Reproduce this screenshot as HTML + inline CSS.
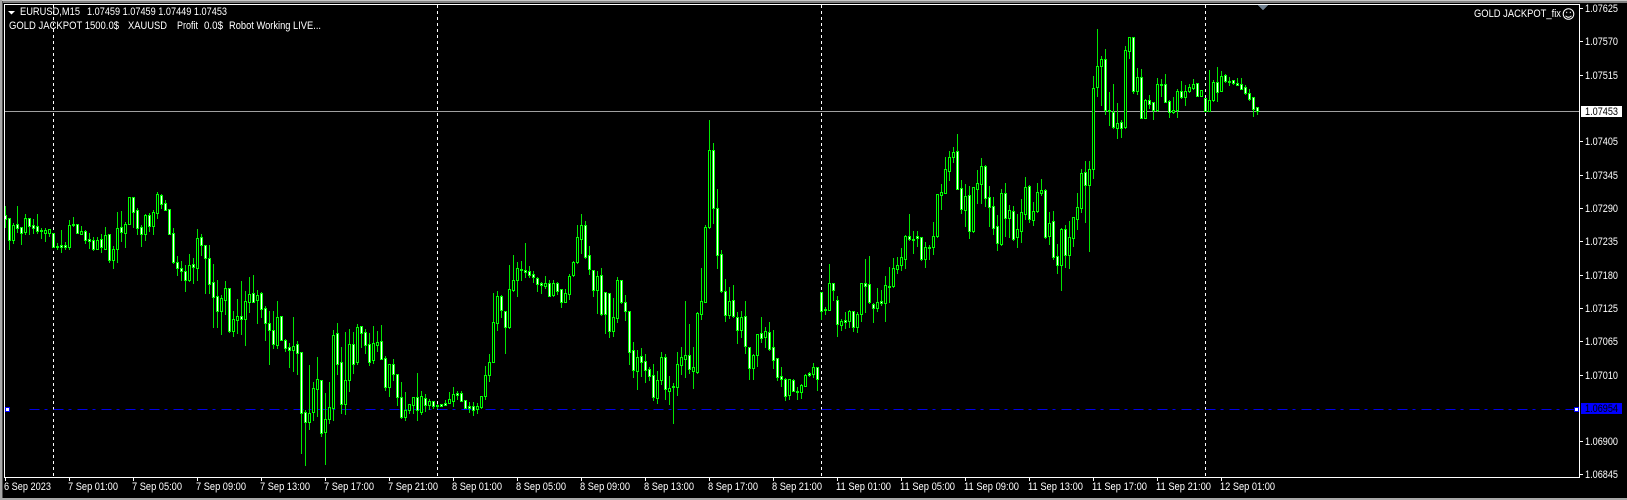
<!DOCTYPE html>
<html>
<head>
<meta charset="utf-8">
<title>EURUSD,M15</title>
<style>
html,body{margin:0;padding:0;background:#000;width:1627px;height:500px;overflow:hidden}
svg{display:block;position:absolute;left:0;top:0}
text{font-family:"Liberation Sans",Arial,sans-serif;font-size:11px;fill:#fff}
</style>
</head>
<body>
<svg xmlns="http://www.w3.org/2000/svg" width="1627" height="500" viewBox="0 0 1627 500" shape-rendering="crispEdges">
<rect width="1627" height="500" fill="#000"/>
<rect width="1627" height="1" fill="#c8c8c8"/>
<rect y="1" width="1627" height="2" fill="#808080"/>
<rect width="2" height="500" fill="#a8a8a8"/>
<rect x="2" y="1" width="1" height="499" fill="#505050"/>
<rect y="498" width="1627" height="2" fill="#a8a8a8"/>
<!-- separators -->
<g stroke="#fff" stroke-width="1" stroke-dasharray="3 3">
<path d="M53.5 5V477M437.5 5V477M821.5 5V477M1205.5 5V477"/>
</g>
<!-- price lines -->
<rect x="5" y="111" width="1574" height="1" fill="#a0a0a0"/>
<path d="M29.3 409.5H1574" stroke="#0000e6" stroke-width="1" stroke-dasharray="10 5 3 6" fill="none"/>
<rect x="5" y="407" width="5" height="5" fill="#0000ff"/><rect x="6" y="408" width="3" height="3" fill="#fff"/>
<rect x="1574" y="407" width="5" height="5" fill="#0000ff"/><rect x="1575" y="408" width="3" height="3" fill="#fff"/>
<g id="candles"></g>
<!-- frame -->
<rect x="4" y="4" width="1576" height="1" fill="#fff"/>
<rect x="4" y="4" width="1" height="474" fill="#fff"/>
<rect x="4" y="477" width="1576" height="1" fill="#fff"/>
<rect x="1579" y="4" width="1" height="474" fill="#fff"/>
<path d="M1258 5H1268L1263 10.5Z" fill="#708090"/>
<!-- ticks -->
<path stroke="#fff" d="M1580 8.5h3M1580 41.5h3M1580 75.5h3M1580 141.5h3M1580 175.5h3M1580 208.5h3M1580 241.5h3M1580 275.5h3M1580 308.5h3M1580 341.5h3M1580 375.5h3M1580 441.5h3M1580 474.5h3"/>
<path stroke="#fff" d="M5.5 478v3M69.5 478v3M133.5 478v3M197.5 478v3M261.5 478v3M325.5 478v3M389.5 478v3M453.5 478v3M517.5 478v3M581.5 478v3M645.5 478v3M709.5 478v3M773.5 478v3M837.5 478v3M901.5 478v3M965.5 478v3M1029.5 478v3M1093.5 478v3M1157.5 478v3M1221.5 478v3"/>
<g shape-rendering="auto">
<!-- header -->
<path d="M8 11H15L11.5 14.5Z" fill="#fff"/>
<text x="20" y="15" textLength="60" lengthAdjust="spacingAndGlyphs">EURUSD,M15</text>
<text x="87" y="15" textLength="140" lengthAdjust="spacingAndGlyphs">1.07459 1.07459 1.07449 1.07453</text>
<text x="9" y="29" textLength="110" lengthAdjust="spacingAndGlyphs">GOLD JACKPOT 1500.0$</text>
<text x="128" y="29" textLength="39" lengthAdjust="spacingAndGlyphs">XAUUSD</text>
<text x="177" y="29" textLength="21" lengthAdjust="spacingAndGlyphs">Profit</text>
<text x="204" y="29" textLength="19" lengthAdjust="spacingAndGlyphs">0.0$</text>
<text x="229" y="29" textLength="92" lengthAdjust="spacingAndGlyphs">Robot Working LIVE...</text>
<text x="1474" y="17" textLength="87" lengthAdjust="spacingAndGlyphs">GOLD JACKPOT_fix</text>
<g fill="none" stroke="#fff" stroke-width="1">
<circle cx="1568.5" cy="14" r="5.3"/>
<path d="M1565.5 15.8q3 3 6 0"/>
<path d="M1566.7 11.7v1.4M1570.3 11.7v1.4"/>
</g>
<!-- price axis -->
<text x="1585" y="12" textLength="33" lengthAdjust="spacingAndGlyphs">1.07625</text>
<text x="1585" y="45" textLength="33" lengthAdjust="spacingAndGlyphs">1.07570</text>
<text x="1585" y="79" textLength="33" lengthAdjust="spacingAndGlyphs">1.07515</text>
<text x="1585" y="145" textLength="33" lengthAdjust="spacingAndGlyphs">1.07405</text>
<text x="1585" y="179" textLength="33" lengthAdjust="spacingAndGlyphs">1.07345</text>
<text x="1585" y="212" textLength="33" lengthAdjust="spacingAndGlyphs">1.07290</text>
<text x="1585" y="245" textLength="33" lengthAdjust="spacingAndGlyphs">1.07235</text>
<text x="1585" y="279" textLength="33" lengthAdjust="spacingAndGlyphs">1.07180</text>
<text x="1585" y="312" textLength="33" lengthAdjust="spacingAndGlyphs">1.07125</text>
<text x="1585" y="345" textLength="33" lengthAdjust="spacingAndGlyphs">1.07065</text>
<text x="1585" y="379" textLength="33" lengthAdjust="spacingAndGlyphs">1.07010</text>
<text x="1585" y="445" textLength="33" lengthAdjust="spacingAndGlyphs">1.06900</text>
<text x="1585" y="478" textLength="33" lengthAdjust="spacingAndGlyphs">1.06845</text>
<rect x="1581" y="106" width="41" height="11" fill="#fff" shape-rendering="crispEdges"/>
<text x="1585" y="115" textLength="33" lengthAdjust="spacingAndGlyphs" style="fill:#000">1.07453</text>
<rect x="1581" y="403" width="41" height="11" fill="#0000ff" shape-rendering="crispEdges"/>
<text x="1585" y="412" textLength="33" lengthAdjust="spacingAndGlyphs" style="fill:#000">1.06954</text>
<!-- time axis -->
<text x="4" y="490" textLength="47" lengthAdjust="spacingAndGlyphs">6 Sep 2023</text>
<text x="68" y="490" textLength="50" lengthAdjust="spacingAndGlyphs">7 Sep 01:00</text>
<text x="132" y="490" textLength="50" lengthAdjust="spacingAndGlyphs">7 Sep 05:00</text>
<text x="196" y="490" textLength="50" lengthAdjust="spacingAndGlyphs">7 Sep 09:00</text>
<text x="260" y="490" textLength="50" lengthAdjust="spacingAndGlyphs">7 Sep 13:00</text>
<text x="324" y="490" textLength="50" lengthAdjust="spacingAndGlyphs">7 Sep 17:00</text>
<text x="388" y="490" textLength="50" lengthAdjust="spacingAndGlyphs">7 Sep 21:00</text>
<text x="452" y="490" textLength="50" lengthAdjust="spacingAndGlyphs">8 Sep 01:00</text>
<text x="516" y="490" textLength="50" lengthAdjust="spacingAndGlyphs">8 Sep 05:00</text>
<text x="580" y="490" textLength="50" lengthAdjust="spacingAndGlyphs">8 Sep 09:00</text>
<text x="644" y="490" textLength="50" lengthAdjust="spacingAndGlyphs">8 Sep 13:00</text>
<text x="708" y="490" textLength="50" lengthAdjust="spacingAndGlyphs">8 Sep 17:00</text>
<text x="772" y="490" textLength="50" lengthAdjust="spacingAndGlyphs">8 Sep 21:00</text>
<text x="836" y="490" textLength="55" lengthAdjust="spacingAndGlyphs">11 Sep 01:00</text>
<text x="900" y="490" textLength="55" lengthAdjust="spacingAndGlyphs">11 Sep 05:00</text>
<text x="964" y="490" textLength="55" lengthAdjust="spacingAndGlyphs">11 Sep 09:00</text>
<text x="1028" y="490" textLength="55" lengthAdjust="spacingAndGlyphs">11 Sep 13:00</text>
<text x="1092" y="490" textLength="55" lengthAdjust="spacingAndGlyphs">11 Sep 17:00</text>
<text x="1156" y="490" textLength="55" lengthAdjust="spacingAndGlyphs">11 Sep 21:00</text>
<text x="1220" y="490" textLength="55" lengthAdjust="spacingAndGlyphs">12 Sep 01:00</text>
</g>
</svg>
<script>
var S=[
[180,0,[78,106,116,140,1,115,115,179,207,1,128,136,179,189,0,78,133,143,155,1,141,141,158,192,1,102,115,155,162,0,115,115,137,162,1,117,136,144,158,1,102,139,152,158,1,143,149,152,174,1,143,151,158,183,0,147,148,158,168,0,158,160,200,200,1,190,198,200,207,1,150,196,200,216,1,186,196,200,207,1,121,136,200,207,0,111,133,136,137,1,133,133,158,160,1,138,154,161,162,0,150,154,179,189,1,160,178,183,205,1,172,181,208,210,1,172,179,206,208,0,162,178,202,216,1,141,166,206,207,0,163,163,240,246,1,198,208,239,264,0,96,145,208,246,0,93,142,155,183,1,126,133,158,201,0,52,52,131,132,0,52,52,95,141,1,84,91,143,162,1,135,142,163,198,1,102,106,161,180,0,100,106,137,153,1,90,97,137,162,0,36,42,98,115,0,41,46,71,85,1,60,70,89,90,1,88,88,161,162,1,145,160,245,250,1,228,247,263,285,1,243,263,272,300,1,255,272,299,333,1,222,256,299,303,0,234,253,260,309,1,148,175,263,300,0,163,172,194,225,1,196,196,233,339,1,195,233,311,340,1,252,307,350,441,1,300,349,392,441,1,345,355,392,462,0,304,325,359,402,0,325,325,453,455,1,393,418,452,468,0,358,409,421,459,0,304,409,418,462,1,334,364,418,495,0,291,343,365,396,0,285,340,365,366,1,331,346,361,429,0,337,340,386,410,1,379,385,428,480,1,393,430,449,552,1,393,451,491,504,1,363,412,494,504,0,409,409,479,480,1,478,481,503,514,1,490,500,509,561,1,411,497,509,573,0,484,493,520,582,1,515,517,700,819,1,690,697,725,855,1,555,700,725,747,0,606,625,697,720,0,531,598,626,708,0,600,600,758,768,1,640,718,755,852,0,606,682,718,728,0]],
[190,82,[420,436,653,690,0,399,430,521,552,1,471,517,641,669,1,425,571,641,671,0,417,463,569,603,0,426,463,521,549,1,403,412,515,523,0,408,409,428,472,1,418,427,464,488,1,430,463,515,525,1,408,460,509,520,0,423,457,464,483,0,405,454,506,507,1,499,505,590,599,1,521,523,590,618,0,507,523,551,570,1,551,553,620,645,1,576,622,680,684,1,606,661,680,690,0,641,643,660,668,0,621,622,645,669,0,549,622,660,690,1,603,619,665,672,0,613,625,644,664,1,627,634,644,657,0,633,634,648,654,1,642,645,647,654,1,642,643,647,648,1,631,640,644,645,1,607,628,640,640,0,590,613,632,648,0,603,610,614,628,1,604,610,632,633,1,631,631,654,655,1,636,648,653,665,1,637,649,660,675,1,640,649,658,668,0,618,619,650,653,0,529,556,617,626,0,492,515,556,573,0,309,395,515,516,0,303,319,398,420,0,316,319,361,381,1,363,364,410,489,1,225,298,410,413,0,195,271,301,303,0,216,235,269,318,0,212,238,240,270,1,159,241,245,261,1,228,244,254,262,1,243,253,262,276,1,262,263,283,303,1,277,280,284,309,1,259,280,288,294,0,270,280,317,318,1,271,280,314,317,0,277,280,304,311,1,297,298,335,351,1,298,310,335,336,0,252,259,311,326,0,214,217,255,257,0,106,142,217,219,0,72,106,146,189,0,94,106,200,203,1,168,196,238,253,1,240,241,299,317,1,243,259,299,369,0,235,256,372,375,1,307,307,371,429,1,310,310,422,440,1,324,382,422,438,0,262,271,383,396,0,270,271,335,339,1,314,337,362,391,1,364,364,485,521,1]],
[110,157,[696,721,779,800,1,721,741,782,836,0,714,739,755,797,1,732,754,779,815,1,772,778,797,810,1,763,796,860,869,1,783,810,863,879,0,727,741,809,822,0,733,741,838,867,1,798,835,842,882,0,820,828,832,938,1,727,763,830,855,0,712,742,764,792,0,573,736,746,800,0,642,736,776,790,1,712,772,782,834,0,607,610,785,788,0,474,574,611,627,0,345,352,575,577,0,30,121,350,354,0,99,121,293,339,1,237,295,434,474,1,420,433,542,547,1,507,544,614,633,1,530,574,614,625,0,525,571,618,620,1,605,622,661,698,1,603,622,659,680,0,573,619,707,728,1,710,712,773,807,1,733,736,773,807,0,672,673,734,768,0,622,670,683,696,1,650,664,680,712,0,636,667,717,719,1,660,712,749,773,1,744,745,800,810,1,771,798,808,828,1,805,808,857,870,1,807,808,854,866,0,808,811,842,843,1,830,843,846,867,1,822,826,845,864,0,793,794,827,828,0,786,790,794,798,1,760,772,792,802,0,772,772,808,840,1,547,547,602,627,1,590,598,600,612,1,462,520,599,600,0,520,520,539,570,1,558,571,643,678,1,628,634,644,660,0,606,631,635,654,1,600,604,632,650,0,604,604,650,663,1,605,613,650,666,0,519,520,613,633,0,447,520,527,605,1,438,523,575,579,1,579,581,593,636,1,534,577,593,603,0,541,574,579,585,1,497,526,578,633,0,472,527,530,576,1,445,474,527,530,0,440,465,477,490,0,415,442,465,480,0,375,379,446,474,0,312,379,388,390,1,362,387,389,429,1,363,379,383,407,1,380,381,447,450,1,395,412,446,470,0,405,412,414,447,0]],
[20,232,[606,649,680,702,0,522,523,648,651,0,492,517,524,567,0,411,448,518,519,0,393,412,452,480,0,381,397,410,426,0,342,394,506,507,1,480,505,566,579,1,492,529,569,618,0,497,524,632,654,1,502,502,633,635,0,450,490,506,549,0,415,439,491,549,0,436,439,533,558,1,498,532,560,618,1,531,559,623,642,1,585,619,668,690,1,507,519,671,674,0,489,520,593,648,1,556,571,593,651,0,558,574,656,659,1,583,628,650,680,0,536,577,632,666,0,472,502,581,597,0,495,499,596,606,1,546,574,599,615,0,489,517,574,576,0,477,511,518,525,0,508,510,650,653,1,575,610,647,672,0,573,604,710,716,1,672,707,734,759,1,624,628,734,810,0,615,628,704,741,1,603,652,704,744,0,590,592,653,678,0,519,562,596,627,0,447,460,563,575,0,423,457,494,606,1,423,446,494,693,0,168,203,446,474,0,27,139,200,228,0,108,118,137,255,0,87,118,269,282,1,216,270,274,315,1,192,276,322,323,1,249,310,323,354,0,300,307,323,351,1,78,91,322,323,0,52,52,94,114,0,52,52,212,219,1,144,172,212,222,0,148,172,293,295,1,238,241,293,295,0,225,241,251,264,1,246,247,269,297,1,174,193,269,273,0,177,192,194,228,1,162,193,245,246,1,241,244,277,291,1,232,271,277,279,0,207,214,270,291,0,183,214,230,233,1,195,212,230,255,0,193,202,212,216,0,178,191,204,207,0,190,190,227,228,1,211,211,227,228,0,234,235,274,274,1,150,241,272,274,0,180,187,240,243,0,141,187,215,243,1,153,169,212,213,0,163,166,182,186,1,171,184,185,195,1,180,181,189,191,1,175,190,194,195,1,174,193,206,208,1,195,202,220,222,1,207,220,236,239,1,232,232,266,288,1,262,262,274,282,1]]
];
var out='';
function r(x,y,w,h,c){out+='<rect x="'+x+'" y="'+y+'" width="'+w+'" height="'+h+'" fill="'+c+'"/>';}
S.forEach(function(s){
  var y0=s[0],i=s[1],d=s[2];
  for(var k=0;k<d.length;k+=5,i++){
    var x=5+4*i,h=Math.round(y0+d[k]/3),t=Math.round(y0+d[k+1]/3),b=Math.round(y0+d[k+2]/3),l=Math.round(y0+d[k+3]/3),f=d[k+4];
    if(x>1300)continue;
    r(x,h,1,Math.max(l-h+1,1),'#00e600');
    if(b<=t+1){r(x-1,t,3,Math.max(b-t,0)+1,'#00ff00');continue;}
    r(x-1,t,3,b-t+1,'#00ff00');
    r(x,t+1,1,b-t-1,f?'#ffffff':'#000000');
  }
});
document.getElementById('candles').innerHTML=out;
</script>
</body>
</html>
